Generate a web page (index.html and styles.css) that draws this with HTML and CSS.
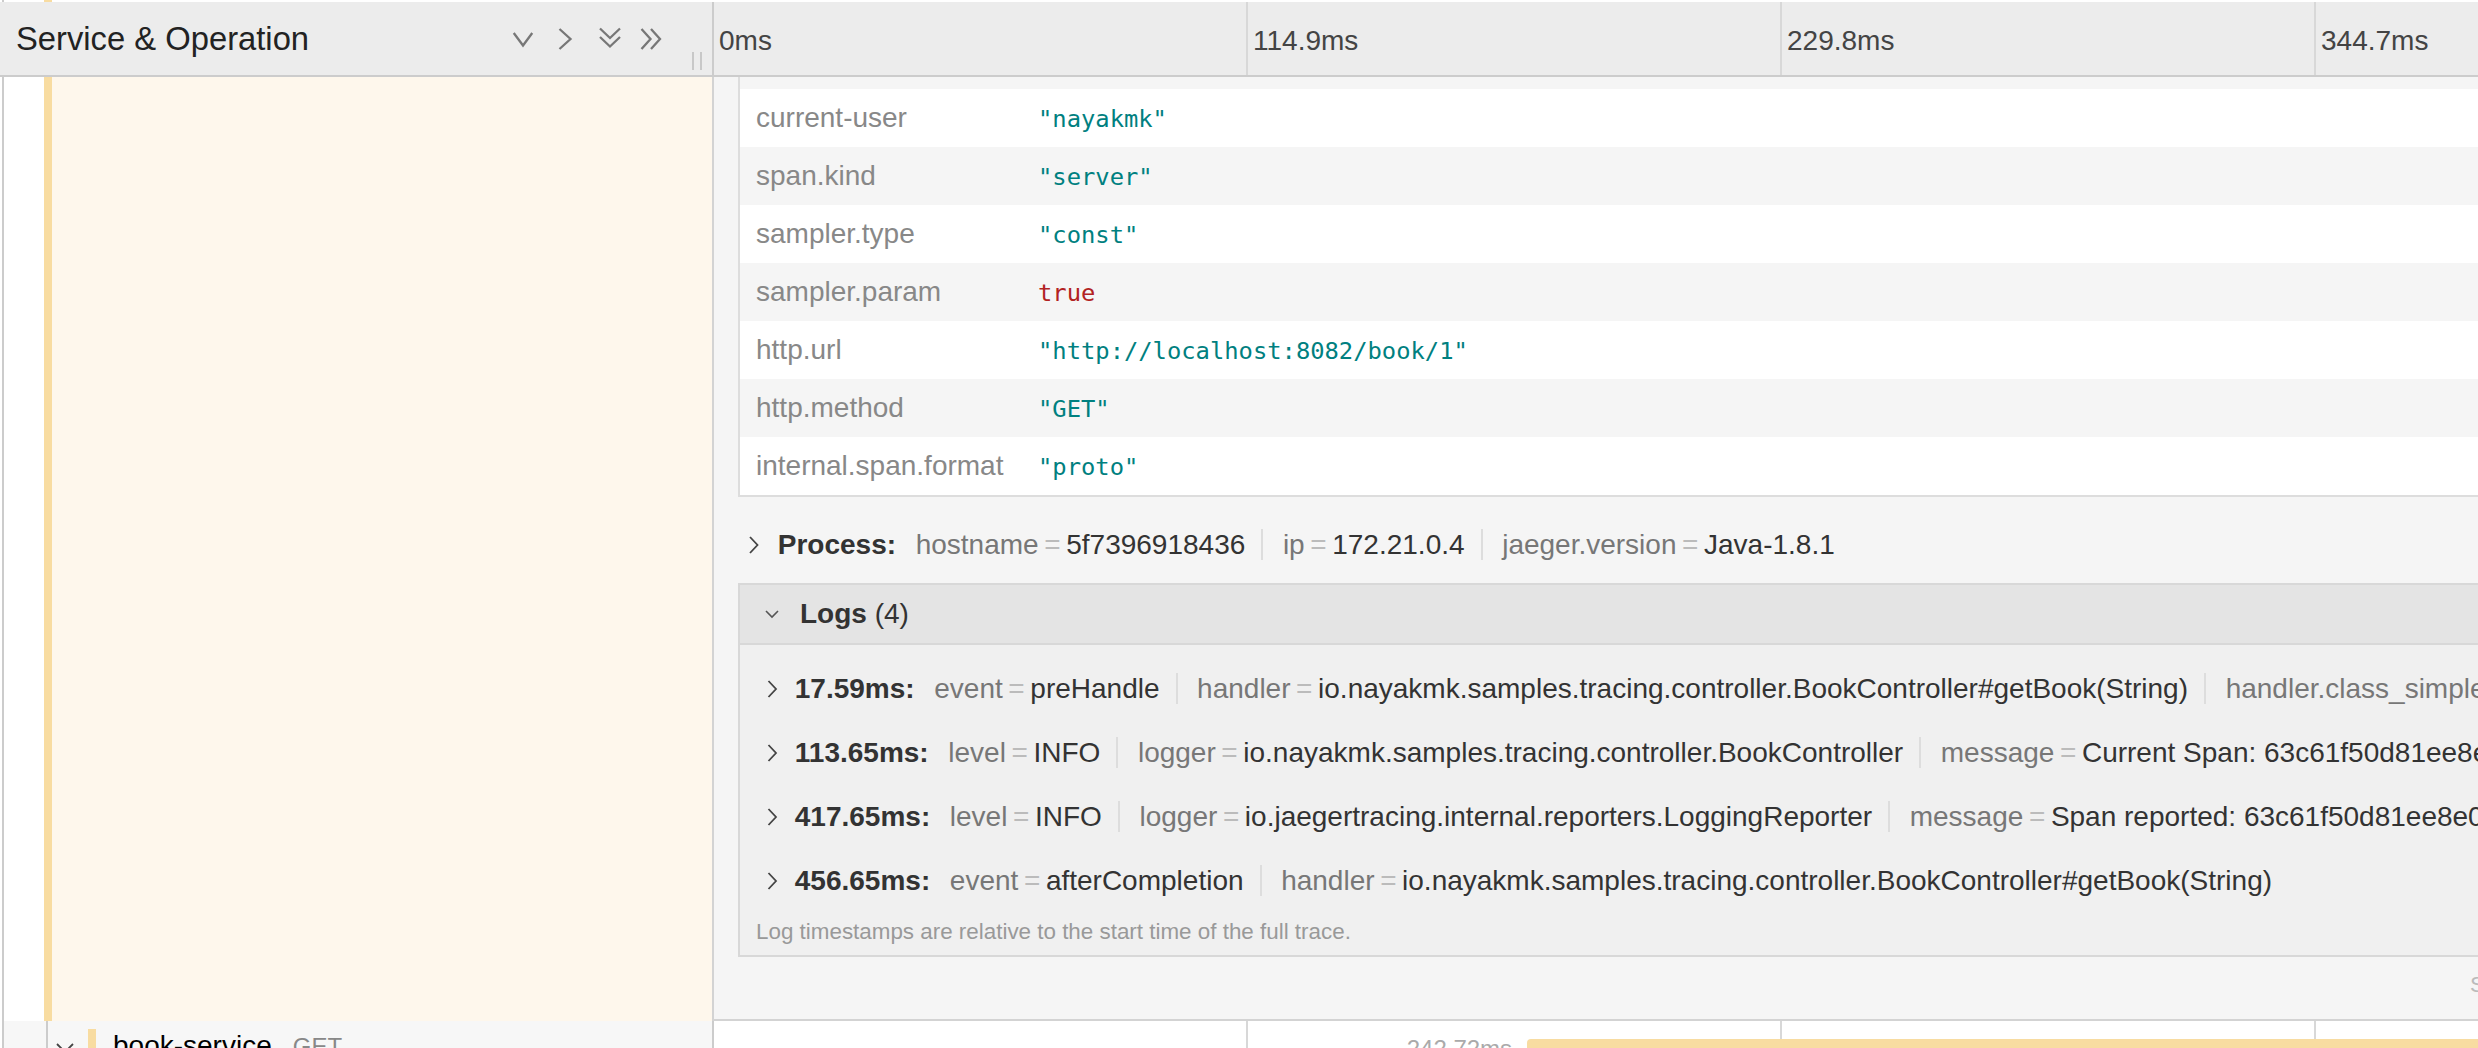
FILE: index.html
```html
<!DOCTYPE html>
<html lang="en">
<head>
<meta charset="utf-8">
<title>Jaeger trace detail</title>
<link rel="stylesheet" href="styles.css">
</head>
<body>
<div class="page">
  <div class="strip">
    <div class="lcol"><span class="gpad"></span><span class="guide"></span><span class="blank"></span><span class="accent"></span><span class="strip-fill"></span></div>
  </div>

  <header class="hdr">
    <div class="hdr-left">
      <h3 class="title">Service &amp; Operation</h3>
      <div class="collapser">
        <svg viewBox="0 0 30 30"><polyline points="5.75,9 15,21.5 24.25,9"/></svg>
        <svg viewBox="0 0 30 30"><polyline points="9.5,5 20.5,15 9.5,25"/></svg>
        <svg class="dd" viewBox="0 0 30 30"><polyline points="5,4.5 15,14 25,4.5"/><polyline points="5,13 15,22.5 25,13"/></svg>
        <svg viewBox="0 0 30 30"><polyline points="4.5,5 13.5,15 4.5,25"/><polyline points="14,5 23,15 14,25"/></svg>
      </div>
      <div class="resizer"></div>
    </div>
    <div class="ticks">
      <div class="tick">0ms</div>
      <div class="tick">114.9ms</div>
      <div class="tick">229.8ms</div>
      <div class="tick">344.7ms</div>
    </div>
  </header>

  <div class="detail-row">
    <div class="lcol"><span class="gpad"></span><span class="guide"></span><span class="blank"></span><span class="accent"></span><span class="cream"></span></div>
    <div class="wrapper">
      <table class="kv">
        <tbody>
          <tr class="alt cut"><td class="k"></td><td class="v"></td></tr>
          <tr><td class="k">current-user</td><td class="v"><span class="str">"nayakmk"</span></td></tr>
          <tr class="alt"><td class="k">span.kind</td><td class="v"><span class="str">"server"</span></td></tr>
          <tr><td class="k">sampler.type</td><td class="v"><span class="str">"const"</span></td></tr>
          <tr class="alt"><td class="k">sampler.param</td><td class="v"><span class="bool">true</span></td></tr>
          <tr><td class="k">http.url</td><td class="v"><span class="str">"http://localhost:8082/book/1"</span></td></tr>
          <tr class="alt"><td class="k">http.method</td><td class="v"><span class="str">"GET"</span></td></tr>
          <tr><td class="k">internal.span.format</td><td class="v"><span class="str">"proto"</span></td></tr>
        </tbody>
      </table>

      <div class="acc-header process">
        <svg class="chev" viewBox="0 0 28 28"><polyline points="6,6 13.5,14 6,22"/></svg>
        <strong class="acc-title">Process:</strong>
        <ul class="summary"><li class="item"><span class="lab">hostname</span><span class="delim">=</span>5f7396918436</li><li class="item"><span class="lab">ip</span><span class="delim">=</span>172.21.0.4</li><li class="item"><span class="lab">jaeger.version</span><span class="delim">=</span>Java-1.8.1</li></ul>
      </div>

      <div class="logs">
        <div class="logs-header">
          <svg class="chev-down" viewBox="0 0 28 28"><polyline points="10,11 16,17 22,11"/></svg>
          <strong>Logs</strong>&nbsp;(4)
        </div>
        <div class="logs-content">
          <div class="acc-header log">
            <svg class="chev" viewBox="0 0 28 28"><polyline points="9.5,6 17,14 9.5,22"/></svg>
            <strong class="acc-title">17.59ms:</strong>
            <ul class="summary"><li class="item"><span class="lab">event</span><span class="delim">=</span>preHandle</li><li class="item"><span class="lab">handler</span><span class="delim">=</span>io.nayakmk.samples.tracing.controller.BookController#getBook(String)</li><li class="item"><span class="lab">handler.class_simple_name</span><span class="delim">=</span>BookController</li><li class="item"><span class="lab">handler.method_name</span><span class="delim">=</span>getBook</li></ul>
          </div>
          <div class="acc-header log">
            <svg class="chev" viewBox="0 0 28 28"><polyline points="9.5,6 17,14 9.5,22"/></svg>
            <strong class="acc-title">113.65ms:</strong>
            <ul class="summary"><li class="item"><span class="lab">level</span><span class="delim">=</span>INFO</li><li class="item"><span class="lab">logger</span><span class="delim">=</span>io.nayakmk.samples.tracing.controller.BookController</li><li class="item"><span class="lab">message</span><span class="delim">=</span>Current Span: 63c61f50d81ee8e0:63c61f50d81ee8e0:0:1</li></ul>
          </div>
          <div class="acc-header log">
            <svg class="chev" viewBox="0 0 28 28"><polyline points="9.5,6 17,14 9.5,22"/></svg>
            <strong class="acc-title">417.65ms:</strong>
            <ul class="summary"><li class="item"><span class="lab">level</span><span class="delim">=</span>INFO</li><li class="item"><span class="lab">logger</span><span class="delim">=</span>io.jaegertracing.internal.reporters.LoggingReporter</li><li class="item"><span class="lab">message</span><span class="delim">=</span>Span reported: 63c61f50d81ee8e0:63c61f50d81ee8e0:0:1 - GET</li></ul>
          </div>
          <div class="acc-header log">
            <svg class="chev" viewBox="0 0 28 28"><polyline points="9.5,6 17,14 9.5,22"/></svg>
            <strong class="acc-title">456.65ms:</strong>
            <ul class="summary"><li class="item"><span class="lab">event</span><span class="delim">=</span>afterCompletion</li><li class="item"><span class="lab">handler</span><span class="delim">=</span>io.nayakmk.samples.tracing.controller.BookController#getBook(String)</li></ul>
          </div>
          <div class="logs-footer">Log timestamps are relative to the start time of the full trace.</div>
        </div>
      </div>

      <small class="debug"><span class="lbl">SpanID:</span> 63c61f50d81ee8e0<span class="copy-btn"><svg class="copy" viewBox="0 0 24 24"><rect x="8" y="8" width="12" height="13" rx="1"/><path d="M5 16V4h11"/></svg></span></small>
    </div>
  </div>

  <div class="span-row">
    <div class="lcol">
      <span class="gpad"></span><span class="guide"></span><span class="blank2"></span><span class="guide"></span>
      <svg class="row-chev" viewBox="0 0 20 14"><polyline points="2,2 10,10 18,2"/></svg>
      <span class="accent row-accent"></span>
      <span class="name">book-service<small class="op">GET</small></span>
    </div>
    <div class="timeline">
      <div class="tcell"></div><div class="tcell"></div><div class="tcell"></div><div class="tcell"></div>
      <div class="bar" style="left:38.16%;width:52.8%"><span class="bar-label">242.72ms</span></div>
    </div>
  </div>
</div>
</body>
</html>
```

FILE: styles.css
```css
* { box-sizing: border-box; }
html, body { margin: 0; padding: 0; }
body {
  width: 2478px;
  height: 1048px;
  overflow: hidden;
  background: #fff;
  font-family: "Liberation Sans", Arial, Helvetica, sans-serif;
  font-size: 28px;
  line-height: 42px;
  color: #333;
}
.page { width: 2848px; }

/* left column pieces */
.lcol { width: 712px; flex: none; display: flex; background: #fff; }
.gpad { width: 2px; flex: none; }
.guide { width: 2px; flex: none; background: #ccc; }
.blank { width: 40px; flex: none; }
.blank2 { width: 42px; flex: none; }
.accent { width: 8px; flex: none; background: #f8dca1; }
.cream { flex: 1; background: #fef7ec; }
.strip-fill { flex: 1; }

.strip { height: 2px; display: flex; }

/* header */
.hdr {
  display: flex;
  height: 75px;
  background: #ececec;
  border-bottom: 2px solid #ccc;
}
.hdr-left {
  width: 712px;
  flex: none;
  display: flex;
  align-items: center;
  padding: 0 10px 0 16px;
}
.title {
  flex: 1;
  margin: 0;
  font-size: 32.76px;
  line-height: 42px;
  font-weight: normal;
  color: #222;
  white-space: nowrap;
}
.collapser { display: flex; gap: 12px; }
.collapser svg {
  width: 30px;
  height: 30px;
  display: block;
  fill: none;
  stroke: #777;
  stroke-width: 2.3;
}
.collapser .dd { margin-left: 3px; }
.resizer {
  align-self: flex-end;
  margin: 0 0 5px 25px;
  width: 10px;
  height: 18px;
  border-left: 2px solid #c8c8c8;
  border-right: 2px solid #c8c8c8;
}
.ticks { display: flex; flex: none; }
.tick {
  width: 534px;
  border-left: 2px solid #d8d8d8;
  padding: 4px 0 0 5px;
  display: flex;
  align-items: center;
  color: #444;
  white-space: nowrap;
}
.tick:first-child { border-left-color: #ccc; }

/* detail row */
.detail-row { display: flex; height: 944px; }
.wrapper {
  flex: none;
  width: 2136px;
  background: #f5f5f5;
  border-left: 2px solid #d3d3d3;
  border-right: 2px solid #d3d3d3;
  border-bottom: 2px solid #d3d3d3;
  padding: 0 24px 24px;
  overflow: hidden;
}
.kv {
  width: 100%;
  border-collapse: collapse;
  background: #fff;
  border: 2px solid #ddd;
  border-top: none;
  margin-bottom: 19.6px;
}
.kv td { padding: 8px 16px; vertical-align: baseline; }
.kv tr.alt td { background: #f5f5f5; }
.kv tr.cut td { padding: 0; height: 12px; line-height: 0; }
.kv td.k {
  box-sizing: content-box;
  width: 250px;
  color: #888;
  white-space: pre;
}
.kv td.v {
  font-family: "DejaVu Sans Mono", "Liberation Mono", monospace;
  font-size: 23.8px;
  line-height: 34px;
  white-space: pre;
}
.str { color: #008080; }
.bool { color: #b22222; }

.acc-header {
  display: flex;
  align-items: center;
  padding: 7px 2.8px;
  line-height: 42px;
  white-space: nowrap;
  overflow: hidden;
}
.acc-header.process { margin-bottom: 10px; padding-left: 5.8px; }
.acc-header.log { margin-bottom: 8px; }
.chev {
  width: 28px;
  height: 28px;
  flex: none;
  margin-right: 8px;
  fill: none;
  stroke: #444;
  stroke-width: 1.8;
}
.process .chev { margin-right: 6px; }
.acc-title { font-weight: bold; color: #333; flex: none; }
.summary { display: block; margin: 0; padding: 0; list-style: none; white-space: nowrap; }
.item {
  display: inline;
  margin-left: 19.6px;
  padding-right: 16px;
  border-right: 2px solid #ddd;
}
.item:last-child { border-right: none; padding-right: 0; }
.lab { color: #777; }
.delim { color: #bbb; padding: 0 5.6px; }

.logs { border: 2px solid #d8d8d8; margin-bottom: 8px; }
.logs-header {
  display: flex;
  align-items: center;
  background: #e4e4e4;
  padding: 8px 16px;
  color: #333;
}
.chev-down {
  width: 28px;
  height: 28px;
  flex: none;
  margin-right: 16px;
  fill: none;
  stroke: #555;
  stroke-width: 1.6;
}
.logs-content {
  background: #f0f0f0;
  border-top: 2px solid #d8d8d8;
  padding: 16px 16px 8px;
}
.logs-footer { color: #999; font-size: 22.4px; line-height: 30px; }

.debug {
  display: block;
  font-size: 22.4px;
  line-height: 33.6px;
  margin: 11.2px 0 -16.8px;
  text-align: right;
  letter-spacing: 0.5px;
  color: #999;
  white-space: nowrap;
}
.debug .lbl { color: #bbb; }
.copy-btn {
  display: inline-block;
  width: 49px;
  margin-left: 12px;
  vertical-align: -5px;
  text-align: center;
}
.copy {
  width: 26px;
  height: 26px;
  fill: none;
  stroke: #999;
  stroke-width: 1.6;
}

/* next span row */
.span-row { display: flex; height: 60px; }
.span-row .lcol { background: #f7f7f7; }
.span-row .gpad { background: #fff; }
.row-chev {
  width: 20px;
  height: 14px;
  flex: none;
  margin: 21px 0 0 7px;
  fill: none;
  stroke: #444;
  stroke-width: 1.8;
}
.row-accent { margin: 8px 0 0 13px; }
.name {
  margin-left: 17px;
  padding-top: 8px;
  line-height: 34px;
  color: #000;
  white-space: nowrap;
}
.op { font-size: 24px; color: #888; margin-left: 21px; }

.timeline {
  position: relative;
  display: flex;
  flex: none;
  width: 2136px;
  background: #fff;
}
.tcell { width: 534px; flex: none; border-left: 2px solid #d8d8d8; }
.tcell:first-child { border-left-color: #ccc; }
.bar {
  position: absolute;
  top: 18px;
  height: 28px;
  background: #f8dca1;
  border-radius: 4px;
}
.bar-label {
  position: absolute;
  right: 100%;
  top: -2px;
  padding-right: 15px;
  color: #aaa;
  font-size: 24px;
  line-height: 24px;
  white-space: nowrap;
}
```
